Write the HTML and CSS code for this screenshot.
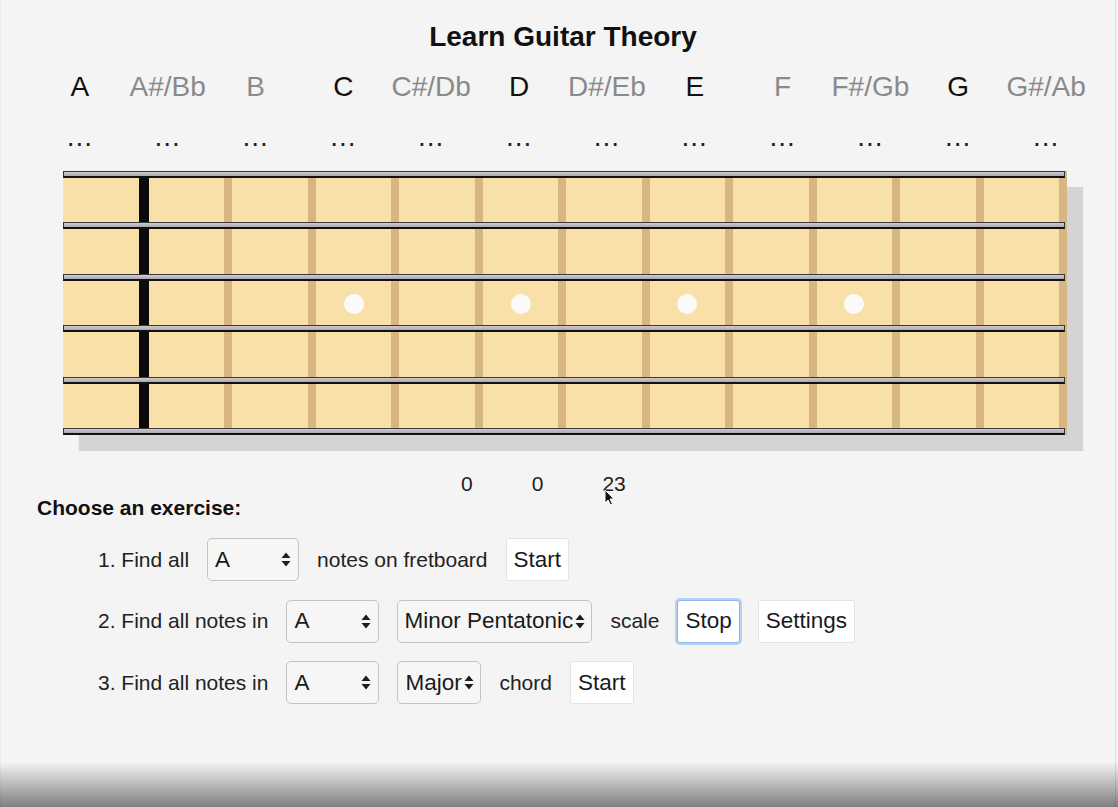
FILE: index.html
```html
<!DOCTYPE html>
<html lang="en">
<head>
<meta charset="utf-8">
<title>Learn Guitar Theory</title>
<link rel="stylesheet" href="styles.css">
</head>
<body>
<div class="page">
  <div class="main">
    <h1 class="title">Learn Guitar Theory</h1>
    <div class="notes">
      <span class="on">A</span><span class="off">A#/Bb</span><span class="off">B</span><span class="on">C</span><span class="off">C#/Db</span><span class="on">D</span><span class="off">D#/Eb</span><span class="on">E</span><span class="off">F</span><span class="off">F#/Gb</span><span class="on">G</span><span class="off">G#/Ab</span>
    </div>
    <div class="notes dots">
      <span>...</span><span>...</span><span>...</span><span>...</span><span>...</span><span>...</span><span>...</span><span>...</span><span>...</span><span>...</span><span>...</span><span>...</span>
    </div>
    <div class="fretboard">
      <div class="frets">
        <div class="fret open"></div>
        <div class="fret"></div>
        <div class="fret"></div>
        <div class="fret"><span class="inlay"></span></div>
        <div class="fret"></div>
        <div class="fret"><span class="inlay"></span></div>
        <div class="fret"></div>
        <div class="fret"><span class="inlay"></span></div>
        <div class="fret"></div>
        <div class="fret"><span class="inlay"></span></div>
        <div class="fret"></div>
        <div class="fret"></div>
      </div>
      <div class="strings">
        <div class="string"></div>
        <div class="string"></div>
        <div class="string"></div>
        <div class="string"></div>
        <div class="string"></div>
        <div class="string"></div>
      </div>
    </div>
    <div class="scores">
      <span>0</span><span>0</span><span class="last">23<svg class="cursor" width="11" height="17" viewBox="0 0 11 17"><path d="M1 1 L1 14 L4 11 L6.5 16 L8.5 15 L6 10 L10 10 Z" fill="#111" stroke="#fff" stroke-width="1"/></svg></span>
    </div>
    <div class="choose">Choose an exercise:</div>
    <div class="exercises">
      <div class="row">
        <span>1. Find all</span>
        <div class="select w-key"><span>A</span><svg class="arrows" width="10" height="15" viewBox="0 0 10 15"><path d="M0.5 6 L5 0.5 L9.5 6 Z M0.5 9 L5 14.5 L9.5 9 Z" fill="#1e1e1e"/></svg></div>
        <span>notes on fretboard</span>
        <button class="btn">Start</button>
      </div>
      <div class="row">
        <span>2. Find all notes in</span>
        <div class="select w-key2"><span>A</span><svg class="arrows" width="10" height="15" viewBox="0 0 10 15"><path d="M0.5 6 L5 0.5 L9.5 6 Z M0.5 9 L5 14.5 L9.5 9 Z" fill="#1e1e1e"/></svg></div>
        <div class="select w-scale"><span>Minor Pentatonic</span><svg class="arrows" width="10" height="15" viewBox="0 0 10 15"><path d="M0.5 6 L5 0.5 L9.5 6 Z M0.5 9 L5 14.5 L9.5 9 Z" fill="#1e1e1e"/></svg></div>
        <span>scale</span>
        <button class="btn focused">Stop</button>
        <button class="btn">Settings</button>
      </div>
      <div class="row">
        <span>3. Find all notes in</span>
        <div class="select w-key2"><span>A</span><svg class="arrows" width="10" height="15" viewBox="0 0 10 15"><path d="M0.5 6 L5 0.5 L9.5 6 Z M0.5 9 L5 14.5 L9.5 9 Z" fill="#1e1e1e"/></svg></div>
        <div class="select w-chord"><span>Major</span><svg class="arrows" width="10" height="15" viewBox="0 0 10 15"><path d="M0.5 6 L5 0.5 L9.5 6 Z M0.5 9 L5 14.5 L9.5 9 Z" fill="#1e1e1e"/></svg></div>
        <span>chord</span>
        <button class="btn">Start</button>
      </div>
    </div>
  </div>
</div>
<div class="fade"></div>
</body>
</html>
```
FILE: styles.css
```css
html, body {
  margin: 0;
  padding: 0;
  background: #f4f4f4;
}
body {
  font-family: "Liberation Sans", Arial, Helvetica, sans-serif;
  color: #1a1a1a;
}
.page {
  width: 1116px;
  height: 807px;
  border-right: 1px solid #dedede;
  border-left: 1px solid #ececec;
  box-sizing: border-box;
  padding-top: 21px;
  overflow: hidden;
}
.main {
  margin-left: 35px;
  width: 1054px;
}
.title {
  margin: 0;
  font-size: 28px;
  line-height: 32px;
  font-weight: bold;
  text-align: center;
  color: #111;
}
.notes {
  margin-top: 18px;
  display: grid;
  grid-template-columns: repeat(12, 1fr);
  font-size: 28px;
  line-height: 32px;
  text-align: center;
}
.notes .on { color: #111; }
.notes .off { color: #8a8a8a; }
.dots {
  color: #222;
  letter-spacing: 1px;
}
.fretboard {
  position: relative;
  margin-top: 18px;
  margin-left: 27px;
  width: 1004px;
  height: 264px;
  background: #f9dfa8;
  box-shadow: 16px 16px 1px #d4d4d4;
}
.frets {
  display: flex;
  height: 100%;
}
.fret {
  flex: 1 1 0;
  box-sizing: border-box;
  border-right: 8px solid #d7b682;
  display: flex;
  align-items: center;
  justify-content: center;
  padding-top: 2px;
}
.fret.open {
  flex: 0 0 86px;
  border-right: 10px solid #0a0a0a;
}
.inlay {
  width: 20px;
  height: 20px;
  border-radius: 50%;
  background: #fbfbfb;
}
.strings {
  position: absolute;
  top: 0;
  left: 0;
  right: 2px;
  bottom: 0;
  display: flex;
  flex-direction: column;
  justify-content: space-between;
}
.string {
  height: 4px;
  border-top: 1px solid #3a3a3a;
  border-bottom: 2px solid #111;
  border-left: 1px solid #333;
  border-right: 1px solid #333;
  background: linear-gradient(#cfcbd2, #aaa7ae);
}
.scores {
  margin-top: 37px;
  padding-left: 425px;
  display: flex;
  gap: 59px;
  font-size: 21px;
  line-height: 24px;
  color: #222;
}
.scores .last {
  position: relative;
}
.cursor {
  position: absolute;
  left: 2px;
  top: 17px;
}
.choose {
  padding-left: 1px;
  font-size: 21px;
  line-height: 24px;
  font-weight: bold;
  color: #111;
}
.exercises {
  margin-top: 18px;
  padding-left: 62px;
  display: flex;
  flex-direction: column;
  gap: 18.5px;
}
.row {
  display: flex;
  align-items: center;
  gap: 18px;
  height: 43px;
  font-size: 21px;
  line-height: 24px;
  color: #222;
  white-space: nowrap;
}
.select {
  box-sizing: border-box;
  height: 43px;
  display: flex;
  align-items: center;
  justify-content: space-between;
  padding: 0 7px 0 7px;
  border: 1px solid #c4c4c4;
  border-radius: 5px;
  background: #f6f6f6;
  color: #1a1a1a;
  font-size: 22.5px;
  white-space: nowrap;
}
.select .arrows { flex: none; display: block; }
.w-key { width: 92px; }
.w-key2 { width: 93px; }
.w-scale { width: 195px; gap: 1px; padding-left: 6px; padding-right: 6px; }
.w-chord { width: 84px; gap: 1px; padding-right: 6px; }
.btn {
  box-sizing: border-box;
  height: 43px;
  padding: 0 7px;
  font-family: "Liberation Sans", Arial, Helvetica, sans-serif;
  font-size: 22.5px;
  color: #1a1a1a;
  background: #ffffff;
  border: 1px solid #e4e4e4;
  border-radius: 2px;
  white-space: nowrap;
}
.btn.focused {
  border: 1px solid #8fb6e8;
  box-shadow: 0 0 0 2px #b7d1f3;
  border-radius: 3px;
}
.fade {
  position: fixed;
  left: 0;
  right: 0;
  bottom: 0;
  height: 45px;
  background: linear-gradient(rgba(0,0,0,0), rgba(0,0,0,0.48));
  pointer-events: none;
}
```
